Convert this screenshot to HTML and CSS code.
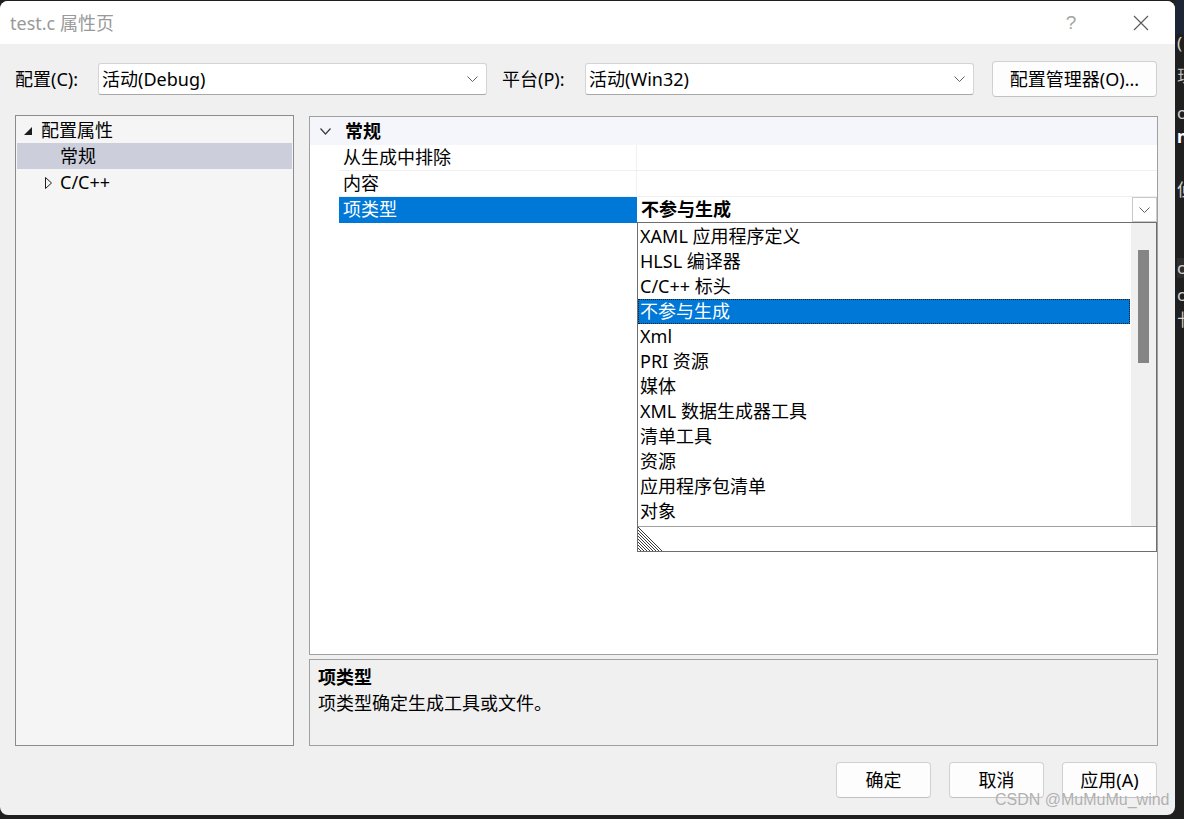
FILE: index.html
```html
<!DOCTYPE html>
<html lang="zh-CN">
<head>
<meta charset="utf-8">
<title>test.c 属性页</title>
<link rel="stylesheet" href="styles.css">
</head>
<body>
<div class="backdrop">
  <span class="frag f1">(</span>
  <span class="frag f2">现</span>
  <span class="frag f3">o</span>
  <span class="frag f4">n</span>
  <span class="frag f5">侦</span>
  <span class="frag f6 band">c</span>
  <span class="frag f7">c</span>
  <span class="frag f8">卄</span>
</div>
<div class="dialog">
  <div class="titlebar">
    <span class="title">test.c 属性页</span>
    <span class="help">?</span>
    <svg class="close" width="16" height="16" viewBox="0 0 16 16"><path d="M1 1 L15 15 M15 1 L1 15" stroke="#5c5c5c" stroke-width="1.2" fill="none"/></svg>
  </div>
  <div class="content">
    <div class="config-row">
      <span class="lbl lbl-config">配置(C):</span>
      <div class="combo combo-config">
        <span class="combo-text">活动(Debug)</span>
        <svg class="chev" width="11" height="6" viewBox="0 0 11 6"><path d="M0.5 0.5 L5.5 5.5 L10.5 0.5" stroke="#606060" fill="none"/></svg>
      </div>
      <span class="lbl lbl-platform">平台(P):</span>
      <div class="combo combo-platform">
        <span class="combo-text">活动(Win32)</span>
        <svg class="chev" width="11" height="6" viewBox="0 0 11 6"><path d="M0.5 0.5 L5.5 5.5 L10.5 0.5" stroke="#606060" fill="none"/></svg>
      </div>
      <button class="btn btn-manager">配置管理器(O)...</button>
    </div>
    <div class="main">
      <div class="tree">
        <div class="tree-row">
          <svg class="tri-open" width="9" height="8" viewBox="0 0 9 8"><polygon points="8,0 8,8 0,8" fill="#1e1e1e"/></svg>
          <span class="tree-text">配置属性</span>
        </div>
        <div class="tree-row selected">
          <span class="tree-text lvl2">常规</span>
        </div>
        <div class="tree-row">
          <svg class="tri-closed" width="7" height="12" viewBox="0 0 7 12"><polygon points="0.5,0.5 6.5,6 0.5,11.5" fill="none" stroke="#1e1e1e"/></svg>
          <span class="tree-text">C/C++</span>
        </div>
      </div>
      <div class="right-col">
        <div class="grid">
          <div class="grid-header">
            <svg class="hdr-chev" width="11" height="7" viewBox="0 0 11 7"><path d="M0.5 0.5 L5.5 6 L10.5 0.5" stroke="#3c3c3c" fill="none" stroke-width="1.2"/></svg>
            <span class="hdr-text">常规</span>
          </div>
          <div class="grid-row">
            <span class="cell-name">从生成中排除</span>
            <span class="cell-value"></span>
          </div>
          <div class="grid-row">
            <span class="cell-name">内容</span>
            <span class="cell-value"></span>
          </div>
          <div class="grid-row active">
            <span class="cell-name">项类型</span>
            <span class="cell-value">
              <span class="value-text">不参与生成</span>
              <span class="drop-btn"><svg width="11" height="6" viewBox="0 0 11 6"><path d="M0.5 0.5 L5.5 5.5 L10.5 0.5" stroke="#606060" fill="none"/></svg></span>
            </span>
          </div>
          <div class="droplist">
            <div class="droplist-body">
              <div class="items">
                <div class="item">XAML 应用程序定义</div>
                <div class="item">HLSL 编译器</div>
                <div class="item">C/C++ 标头</div>
                <div class="item sel">不参与生成</div>
                <div class="item">Xml</div>
                <div class="item">PRI 资源</div>
                <div class="item">媒体</div>
                <div class="item">XML 数据生成器工具</div>
                <div class="item">清单工具</div>
                <div class="item">资源</div>
                <div class="item">应用程序包清单</div>
                <div class="item">对象</div>
              </div>
              <div class="scrollbar"><div class="thumb"></div></div>
            </div>
            <div class="grip-row">
              <svg class="grip" width="26" height="24" viewBox="0 0 26 24">
                <g stroke="#3a3a3a" stroke-width="1">
                  <line x1="0" y1="0" x2="24" y2="24"/>
                  <line x1="0" y1="3" x2="21" y2="24"/>
                  <line x1="0" y1="6" x2="18" y2="24"/>
                  <line x1="0" y1="9" x2="15" y2="24"/>
                  <line x1="0" y1="12" x2="12" y2="24"/>
                  <line x1="0" y1="15" x2="9" y2="24"/>
                  <line x1="0" y1="18" x2="6" y2="24"/>
                  <line x1="0" y1="21" x2="3" y2="24"/>
                </g>
              </svg>
            </div>
          </div>
        </div>
        <div class="desc">
          <div class="desc-title">项类型</div>
          <div class="desc-text">项类型确定生成工具或文件。</div>
        </div>
      </div>
    </div>
    <div class="buttons">
      <button class="btn btn-dlg">确定</button>
      <button class="btn btn-dlg">取消</button>
      <button class="btn btn-dlg">应用(A)</button>
    </div>
  </div>
</div>
<div class="watermark">CSDN @MuMuMu_wind</div>
</body>
</html>
```
FILE: styles.css
```css
* { box-sizing: border-box; }
html, body { margin: 0; padding: 0; }
body {
  width: 1184px;
  height: 819px;
  overflow: hidden;
  background: #1f1f1f;
  position: relative;
  font-family: "Noto Sans", "Noto Sans CJK SC", sans-serif;
  font-size: 18px;
  color: #000;
}

.backdrop {
  position: absolute;
  left: 1175px;
  top: 0;
  width: 9px;
  height: 819px;
  overflow: hidden;
  background: linear-gradient(#1b2535 0, #1b2535 34px, #1f1f1f 34px);
}
.frag {
  position: absolute;
  left: 2px;
  color: #d0d0d0;
  font-size: 17px;
  line-height: 20px;
}
.f1 { top: 33px; }
.f2 { top: 66px; color: #bcbcbc; }
.f3 { top: 103px; }
.f4 { top: 127px; font-weight: bold; color: #fff; }
.f5 { top: 180px; }
.f6 { top: 258px; }
.f7 { top: 285px; }
.f8 { top: 310px; }
.band { background: #2d2d2d; width: 9px; }

.dialog {
  width: 1175px;
  height: 814px;
  margin-top: 1px;
  background: #f0f0f0;
  border-radius: 8px;
  overflow: hidden;
  display: flex;
  flex-direction: column;
}

.titlebar {
  height: 43px;
  flex-shrink: 0;
  background: #fff;
  display: flex;
  align-items: center;
  padding-left: 10px;
}
.title {
  flex: 1;
  color: #999;
  line-height: 24px;
}
.help {
  width: 24px;
  text-align: center;
  color: #a3a3a3;
  font-family: "Liberation Sans", sans-serif;
  font-size: 19px;
  margin-right: 50px;
}
.close {
  margin-right: 26px;
}

.content {
  flex: 1;
  display: flex;
  flex-direction: column;
  padding: 0 17px 0 15px;
}

.config-row {
  margin-top: 17px;
  height: 36px;
  display: flex;
  align-items: center;
}
.lbl {
  line-height: 24px;
  white-space: nowrap;
}
.lbl-config { width: 83px; }
.lbl-platform { width: 83px; margin-left: 15px; }
.combo {
  width: 389px;
  height: 32px;
  background: #fff;
  border: 1px solid #d4d4d4;
  border-bottom-color: #a8a8a8;
  border-radius: 3px;
  display: flex;
  align-items: center;
  padding: 0 8px 0 3px;
}
.combo-text {
  flex: 1;
  line-height: 24px;
}
.chev { flex-shrink: 0; }

.btn {
  font-family: inherit;
  font-size: 18px;
  color: #000;
  background: #fdfdfd;
  border: 1px solid #d0d0d0;
  border-bottom-color: #c2c2c2;
  border-radius: 4px;
  padding: 0;
  line-height: 24px;
}
.btn-manager {
  margin-left: 18px;
  width: 165px;
  height: 36px;
}

.main {
  margin-top: 18px;
  height: 631px;
  display: flex;
  align-items: flex-start;
}

.tree {
  width: 279px;
  height: 631px;
  background: #f5f5f5;
  border: 1px solid #8c8c8c;
  padding: 1px 1px 0 1px;
}
.tree-row {
  height: 26px;
  display: flex;
  align-items: center;
  position: relative;
}
.tree-row.selected { background: #cccedb; }
.tree-text {
  line-height: 24px;
  margin-left: 24px;
}
.tree-text.lvl2 { margin-left: 43px; }
.tri-open {
  position: absolute;
  left: 7px;
  top: 10px;
}
.tri-closed {
  position: absolute;
  left: 28px;
  top: 8px;
}
.tree-row .tri-closed + .tree-text { margin-left: 43px; }

.right-col {
  margin-left: 15px;
  width: 849px;
  display: flex;
  flex-direction: column;
}

.grid {
  margin-top: 1px;
  height: 539px;
  background: #fff;
  border: 1px solid #a0a0a0;
  position: relative;
}
.grid-header {
  height: 28px;
  background: #f4f6fb;
  display: flex;
  align-items: center;
}
.hdr-chev { margin-left: 10px; }
.hdr-text {
  font-weight: bold;
  margin-left: 14px;
  line-height: 24px;
}
.grid-row {
  height: 26px;
  margin-left: 29px;
  display: flex;
  border-bottom: 1px solid #f0f0f0;
}
.cell-name {
  width: 298px;
  border-right: 1px solid #f0f0f0;
  padding-left: 4px;
  line-height: 25px;
  white-space: nowrap;
}
.cell-value {
  flex: 1;
  display: flex;
  align-items: flex-start;
}
.grid-row.active { border-bottom: none; }
.grid-row.active .cell-name {
  background: #0078d7;
  color: #fff;
  border-right-color: #0078d7;
}
.value-text {
  flex: 1;
  font-weight: bold;
  padding-left: 4px;
  line-height: 25px;
}
.drop-btn {
  width: 25px;
  height: 25px;
  background: #fff;
  border: 1px solid #c9c9c9;
  display: flex;
  align-items: center;
  justify-content: center;
}

.droplist {
  position: absolute;
  left: 327px;
  top: 105px;
  width: 520px;
  height: 330px;
  background: #fff;
  border: 1px solid #6e6e6e;
  display: flex;
  flex-direction: column;
}
.droplist-body {
  height: 303px;
  display: flex;
}
.items {
  flex: 1;
  padding-top: 1px;
  padding-right: 1px;
}
.item {
  height: 25px;
  line-height: 25px;
  padding-left: 2px;
  white-space: nowrap;
}
.item.sel {
  background: #0078d7;
  color: #fff;
  outline: 1px dotted #1a1a1a;
  outline-offset: -1px;
}
.scrollbar {
  width: 25px;
  background: #f0f0f0;
  padding: 27px 0 0 7px;
}
.thumb {
  width: 11px;
  height: 113px;
  background: #858585;
}
.grip-row {
  flex: 1;
  border-top: 1px solid #a0a0a0;
  display: flex;
  align-items: flex-end;
}
.grip { display: block; }

.desc {
  margin-top: 4px;
  height: 87px;
  border: 1px solid #a0a0a0;
  background: #f0f0f0;
  padding: 4px 8px 0 8px;
}
.desc-title {
  font-weight: bold;
  line-height: 26px;
}
.desc-text {
  line-height: 26px;
}

.buttons {
  margin-top: 16px;
  margin-right: 1px;
  display: flex;
  justify-content: flex-end;
  gap: 18px;
}
.btn-dlg {
  width: 95px;
  height: 36px;
}

.watermark {
  position: absolute;
  left: 995px;
  top: 790px;
  font-family: "Liberation Sans", sans-serif;
  font-size: 16px;
  line-height: 20px;
  color: #b0b0b0;
  text-shadow: 0 0 1px rgba(255,255,255,0.6);
}
```
